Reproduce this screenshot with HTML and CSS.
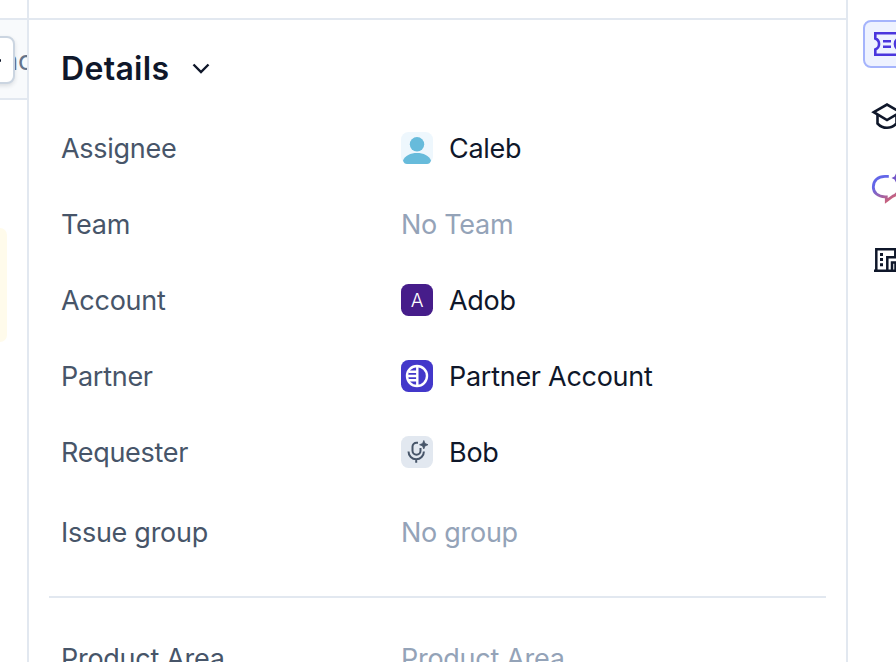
FILE: index.html
```html
<!DOCTYPE html>
<html lang="en">
<head>
    <meta charset="UTF-8">
    <meta name="viewport" content="width=device-width, initial-scale=1.0">
    <title>Details</title>
    <link rel="stylesheet" href="styles.css">
</head>
<body>
    <div class="app">
        <aside class="left">
            <div class="left-top"></div>
            <div class="left-bar">
                <span class="left-text">ac</span>
                <div class="left-button"><span class="dot"></span></div>
            </div>
            <div class="note"></div>
        </aside>

        <main class="panel">
            <div class="panel-top"></div>
            <header class="title">
                <h1>Details</h1>
                <svg width="20" height="12" viewBox="0 0 20 12" fill="none" stroke="#0f172a" stroke-width="2.4"><path d="M2.500 2.500l7.500 7.500 7.500-7.500"/></svg>
            </header>

            <div class="row">
                <span class="label">Assignee</span>
                <svg class="icon" viewBox="0 0 32 32"><rect width="32" height="32" rx="7.500" fill="#eef7fd"/><circle cx="16" cy="12.3" r="7.2" fill="#67bbdb"/><path d="M2 28.500C4 23.500 9.500 21 16 21s12 2.500 14 7.500Q29 32 26 32H6Q3 32 2 28.500z" fill="#67bbdb"/></svg>
                <span class="value">Caleb</span>
            </div>
            <div class="row">
                <span class="label">Team</span>
                <span class="value empty">No Team</span>
            </div>
            <div class="row">
                <span class="label">Account</span>
                <span class="icon letter">A</span>
                <span class="value">Adob</span>
            </div>
            <div class="row">
                <span class="label">Partner</span>
                <svg class="icon" viewBox="0 0 32 32" fill="none" stroke="#fff" stroke-width="2.400"><rect width="32" height="32" rx="7.500" fill="#4338ca" stroke="none"/><circle cx="16" cy="16" r="10"/><path d="M16.300 6v20M8 11.700h8M6 16h10M8 20.300h8"/></svg>
                <span class="value">Partner Account</span>
            </div>
            <div class="row">
                <span class="label">Requester</span>
                <svg class="icon" viewBox="0 0 32 32" fill="none" stroke="#475569" stroke-width="2"><rect width="32" height="32" rx="7.500" fill="#e2e8f0" stroke="none"/><path d="M17 6.700h-1.500a4 4 0 0 0-4 4v4a4 4 0 0 0 8 0V12M7.500 15.500a7.700 7.700 0 0 0 15.400 0M15.200 22.500v4.200"/><path d="M22.800 4.500l1.200 3 3 1.200-3 1.200-1.200 3-1.200-3-3-1.200 3-1.200z" fill="#475569"  stroke-width=".8"/></svg>
                <span class="value">Bob</span>
            </div>
            <div class="row group">
                <span class="label">Issue group</span>
                <span class="value empty">No group</span>
            </div>
            <hr class="divider">
            <div class="row product">
                <span class="label">Product Area</span>
                <span class="value empty">Product Area</span>
            </div>
        </main>

        <nav class="rail">
            <div class="rail-item active">
                <svg width="32" height="32" viewBox="0 0 32 32" fill="none" stroke="#4a36dd" stroke-width="2.600"><path d="M4.300 5.300h23.400v5.200c-5 2-5 9 0 11v5.200H4.300v-5.200c5-2 5-9 0-11z"/><path d="M12 13.300h8M12 18.700h8"/></svg>
            </div>
            <div class="rail-item">
                <svg width="32" height="32" viewBox="0 0 32 32" fill="none" stroke="#0f172a" stroke-width="2.600"><path d="M2.800 12.200L16 4.600l13.200 7.600L16 20z"/><path d="M6.500 14.500v9q4 4.300 9.500 4.300t9.500-4.300v-9"/></svg>
            </div>
            <div class="rail-item">
                <svg width="32" height="32" viewBox="0 0 32 32" fill="none">
                    <defs><linearGradient id="chat" x1="5" y1="4" x2="22" y2="30" gradientUnits="userSpaceOnUse"><stop offset=".25" stop-color="#6366e8"/><stop offset="1" stop-color="#d9606a"/></linearGradient></defs>
                    <path d="M17.800 4.400H14C7 4.400 2.300 8.500 2.300 15c0 5.800 4.700 9.600 11.700 9.900h1.300v4l6.200-4.500c4-1.500 6-4.500 6.500-8.200" stroke="url(#chat)" stroke-width="2.800"/>
                    <path d="M25 1.500l1.500 3 3 1.500-3 1.500-1.500 3-1.500-3-3-1.500 3-1.500z" fill="#7356c8"/>
                </svg>
            </div>
            <div class="rail-item">
                <svg width="32" height="32" viewBox="0 0 32 32" fill="none" stroke="#0f172a" stroke-width="2.500"><path d="M3 26.700h27M5.300 26.500V5.300h19V13M16.300 26V13.300H29V26.500M21 26v-7.500h3.500V26"/><path d="M9 10.500h3M9 15.500h3M9 20.800h3" stroke-width="3"/></svg>
            </div>
        </nav>
    </div>
</body>
</html>
```
FILE: styles.css
```css
* {
    box-sizing: border-box;
}

body {
    margin: 0;
    height: 100vh;
    overflow: hidden;
    background-color: white;
    color: #0f172a;
    font-family: Inter, "Liberation Sans", sans-serif;
    font-size: 27px;
    letter-spacing: -0.28px;
}

.app {
    display: flex;
    height: 100vh;
}

.left {
    width: 29px;
    flex: none;
    border-right: 2px solid #e2e8f0;
    overflow: hidden;
}

.left-top,
.panel-top {
    height: 20px;
    border-bottom: 2px solid #e2e8f0;
}

.left-bar {
    position: relative;
    height: 80px;
    background-color: #f8fafc;
    border-bottom: 2px solid #e2e8f0;
}

.left-text {
    position: absolute;
    left: 3px;
    top: 25px;
    line-height: 32px;
    color: #64748b;
}

.left-button {
    position: absolute;
    left: -33px;
    top: 16px;
    width: 48px;
    height: 48px;
    background-color: white;
    border: 2px solid #cbd5e1;
    border-radius: 8px;
    box-shadow: 0 2px 4px rgba(15, 23, 42, 0.12);
}

.dot {
    position: absolute;
    left: 28px;
    top: 21px;
    width: 4px;
    height: 3px;
    border-radius: 1px;
    background-color: #0f172a;
}

.note {
    width: 7px;
    height: 114px;
    margin-top: 128px;
    background-color: #fffbeb;
    border-radius: 0 8px 8px 0;
}

.panel {
    width: 817px;
    flex: none;
    overflow: hidden;
}

.title {
    display: flex;
    align-items: center;
    gap: 22px;
    height: 96px;
    padding-left: 32px;
}

.title h1 {
    margin: 0;
    font-size: 32px;
    font-weight: 600;
    letter-spacing: 0.3px;
}

.row {
    display: flex;
    align-items: center;
    height: 76px;
    padding-left: 32px;
    line-height: 40px;
}

.title + .row {
    margin-top: -6px;
}

.label,
.value {
    padding-top: 2px;
}

.label {
    width: 340px;
    color: #475569;
}

.icon {
    width: 32px;
    height: 32px;
    margin-right: 16px;
    flex: none;
}

.letter {
    border-radius: 7.5px;
    background-color: #461d8a;
    color: white;
    font-size: 19px;
    font-weight: 300;
    line-height: 33px;
    text-align: center;
}

.empty {
    color: #94a3b8;
}

.group {
    margin-top: 4px;
}

.divider {
    height: 2px;
    margin: 26px 20px 22px;
    border: 0;
    background-color: #e2e8f0;
}

.rail {
    display: flex;
    flex-direction: column;
    gap: 24px;
    flex: 1;
    padding: 20px 0 0 15px;
    border-left: 2px solid #e2e8f0;
    overflow: hidden;
}

.rail-item {
    width: 48px;
    height: 48px;
    padding: 8px;
    border-radius: 8px;
}

.rail-item svg {
    display: block;
}

.active {
    padding: 6px;
    border: 2px solid #a5b4fc;
    background-color: #eef2ff;
}
```
